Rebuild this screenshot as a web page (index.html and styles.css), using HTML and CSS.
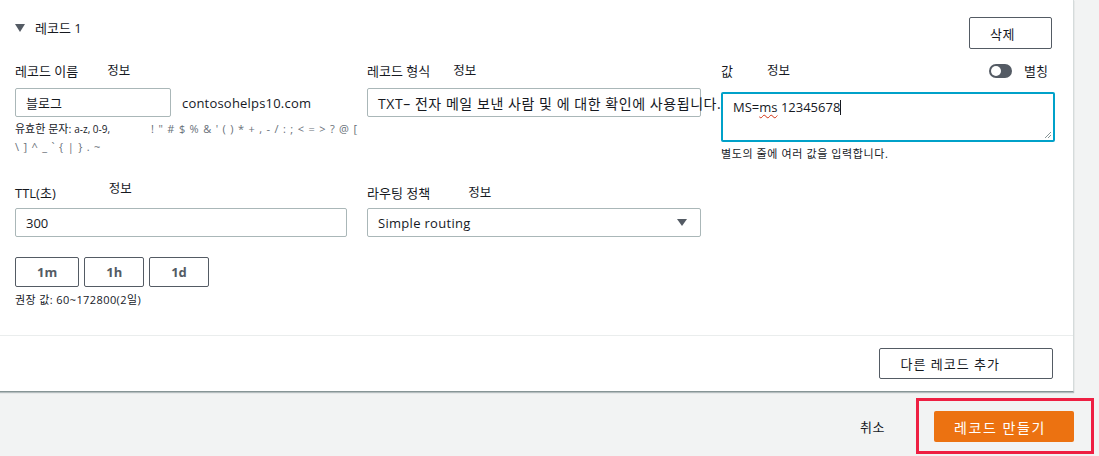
FILE: index.html
```html
<!DOCTYPE html>
<html lang="ko">
<head>
  <meta charset="UTF-8" />
  <meta name="viewport" content="width=device-width, initial-scale=1.0"/>
  <title>레코드 만들기</title>
  <link rel="stylesheet" href="styles.css">
</head>
<body>
  <div class="card">
    <div class="record-head">
      <div class="record-title"><span class="caret-down"></span>레코드 1</div>
      <button class="btn btn-delete">삭제</button>
    </div>

    <div class="fields">
      <div class="field">
        <div class="label-row"><span class="label">레코드 이름</span><span class="info info-name">정보</span></div>
        <div class="name-row">
          <div class="input input-name">블로그</div>
          <span class="domain">contosohelps10.com</span>
        </div>
        <div class="hint">
          <div class="hint-line">유효한 문자: <small>a-z, 0-9,</small><span class="chars chars-gap">! " # $ % &amp; ' ( ) * + , - / : ; &lt; = &gt; ? @ [</span></div>
          <div class="hint-line"><span class="chars">\ ] ^ _ ` { | } . ~</span></div>
        </div>
      </div>

      <div class="field">
        <div class="label-row"><span class="label">레코드 형식</span><span class="info">정보</span></div>
        <div class="input input-type">TXT– 전자 메일 보낸 사람 및 에 대한 확인에 사용됩니다.</div>
      </div>

      <div class="field">
        <div class="label-row">
          <span class="label">값</span><span class="info info-value">정보</span>
          <div class="alias">
            <span class="toggle"></span>
            <span>별칭</span>
          </div>
        </div>
        <div class="textarea">MS=<span class="typo">ms</span> 12345678<span class="cursor"></span>
          <svg class="grip" width="9" height="9" viewBox="0 0 9 9">
            <path d="M8 2 L2 8 M8 5 L5 8" stroke="#879596" stroke-width="1"/>
          </svg>
        </div>
        <div class="note">별도의 줄에 여러 값을 입력합니다.</div>
      </div>
    </div>

    <div class="fields fields-second">
      <div class="field">
        <div class="label-row"><span class="label">TTL(초)</span><span class="info info-ttl">정보</span></div>
        <div class="input">300</div>
        <div class="ttl-buttons">
          <button class="btn btn-ttl">1m</button>
          <button class="btn btn-ttl">1h</button>
          <button class="btn btn-ttl">1d</button>
        </div>
        <div class="note note-ttl">권장 값: 60~172800(2일)</div>
      </div>

      <div class="field">
        <div class="label-row"><span class="label">라우팅 정책</span><span class="info info-routing">정보</span></div>
        <div class="input select">
          <span>Simple routing</span>
          <svg width="10" height="7" viewBox="0 0 10 7"><path d="M0 0 H10 L5 7 Z" fill="#545b64"/></svg>
        </div>
      </div>
    </div>

    <div class="divider"></div>

    <div class="card-foot">
      <button class="btn btn-add">다른 레코드 추가</button>
    </div>
  </div>

  <div class="page-foot">
    <span class="cancel">취소</span>
    <div class="highlight">
      <button class="btn-primary">레코드 만들기</button>
    </div>
  </div>
</body>
</html>
```

FILE: styles.css
```css
* {
  margin: 0;
  padding: 0;
  box-sizing: border-box;
}

body {
  font-family: 'Open Sans', 'Noto Sans CJK KR', sans-serif;
  font-size: 13px;
  color: #16191f;
  background: #f2f3f3;
  width: 1099px;
  height: 456px;
  overflow: hidden;
}

.card {
  width: 1074px;
  background: #fff;
  border-right: 1px solid #d5dbdb;
  border-bottom: 1px solid #879596;
  box-shadow: 0 1px 1px rgba(0, 28, 36, 0.25);
}

.record-head {
  display: flex;
  justify-content: space-between;
  align-items: flex-start;
  padding: 0 21px 0 15px;
  height: 49px;
}

.record-title {
  display: flex;
  align-items: center;
  margin-top: 19px;
  line-height: 18px;
  font-size: 13px;
}

.caret-down {
  width: 0;
  height: 0;
  border-left: 5px solid transparent;
  border-right: 5px solid transparent;
  border-top: 8px solid #545b64;
  margin-right: 10px;
}

.btn {
  font-family: inherit;
  font-size: 13px;
  color: #16191f;
  background: #fff;
  border: 1px solid #545b64;
  border-radius: 2px;
  cursor: pointer;
}

.btn-delete {
  margin-top: 17px;
  height: 32px;
  padding: 0 36px 0 20px;
  letter-spacing: 0.5px;
}

.fields {
  display: grid;
  grid-template-columns: 332px 334px 334px;
  column-gap: 20px;
  padding-left: 15px;
  margin-top: 12px;
  align-items: start;
}

.fields-second {
  margin-top: 21px;
}

.label-row {
  display: flex;
  align-items: center;
  height: 20px;
  line-height: 20px;
}

.info {
  margin-left: 23px;
  font-size: 12.5px;
}

.info-name {
  margin-left: 29px;
}

.info-value {
  margin-left: 34px;
}

.info-ttl {
  margin-left: 53px;
  margin-top: -8px;
}

.info-routing {
  margin-left: 38px;
}

.alias {
  margin-left: auto;
  margin-right: 7px;
  display: flex;
  align-items: center;
  gap: 12px;
}

.toggle {
  width: 23px;
  height: 14px;
  border-radius: 7px;
  background: #545b64;
  position: relative;
}

.toggle::after {
  content: '';
  position: absolute;
  left: 2px;
  top: 2px;
  width: 10px;
  height: 10px;
  border-radius: 50%;
  background: #fff;
}

.input {
  margin-top: 7px;
  height: 29px;
  border: 1px solid #aab7b8;
  border-radius: 2px;
  padding: 0 10px;
  display: flex;
  align-items: center;
  white-space: nowrap;
  font-size: 13px;
}

.fields-second .input {
  margin-top: 5px;
}

.name-row {
  display: flex;
  align-items: center;
  gap: 11px;
}

.input-name {
  width: 156px;
}

.domain {
  margin-top: 7px;
  letter-spacing: 0.2px;
}

.input-type {
  font-size: 14px;
  letter-spacing: 0.55px;
  overflow: visible;
}

.hint {
  margin-top: 3px;
  font-size: 11px;
  line-height: 17px;
}

.hint-line {
  white-space: nowrap;
}

.hint small {
  font-size: 10px;
}

.chars {
  color: #687078;
  font-size: 11px;
  letter-spacing: 0.8px;
}

.chars-gap {
  margin-left: 41px;
}

.textarea {
  position: relative;
  margin-top: 11px;
  height: 50px;
  border: 2px solid #00a1c9;
  border-radius: 2px;
  padding: 4px 10px;
  line-height: 18px;
  font-size: 13px;
}

.typo {
  text-decoration: underline wavy #d13212;
  text-decoration-thickness: 1px;
  text-underline-offset: 2px;
}

.cursor {
  display: inline-block;
  width: 1px;
  height: 15px;
  background: #16191f;
  vertical-align: -3px;
}

.grip {
  position: absolute;
  right: 1px;
  bottom: 1px;
}

.note {
  margin-top: 4px;
  font-size: 11px;
  letter-spacing: 0.6px;
  line-height: 16px;
}

.ttl-buttons {
  display: flex;
  gap: 5px;
  margin-top: 20px;
}

.btn-ttl {
  height: 30px;
  padding: 0 21px;
  font-weight: bold;
  color: #545b64;
}

.note-ttl {
  margin-top: 5px;
  letter-spacing: 0.4px;
}

.select {
  justify-content: space-between;
  padding-right: 13px;
}

.select span {
  letter-spacing: 0.3px;
}

.divider {
  margin-top: 27px;
  height: 1px;
  background: #eaeded;
}

.card-foot {
  display: flex;
  justify-content: flex-end;
  padding: 12px 20px 12px 0;
}

.btn-add {
  height: 31px;
  padding: 0 52px 0 21px;
  letter-spacing: 1px;
}

.page-foot {
  display: flex;
  justify-content: flex-end;
  align-items: center;
  padding: 6px 5px 0 0;
  gap: 31px;
}

.cancel {
  font-size: 13px;
  letter-spacing: 0.5px;
}

.highlight {
  border: 3px solid #ee1f42;
  padding: 10px 17px 9px 15px;
}

.btn-primary {
  display: block;
  height: 31px;
  width: 140px;
  padding: 0 8px 0 0;
  font-family: inherit;
  font-size: 14px;
  letter-spacing: 1.6px;
  color: #fff;
  background: #ec7211;
  border: none;
  border-radius: 2px;
}
```
